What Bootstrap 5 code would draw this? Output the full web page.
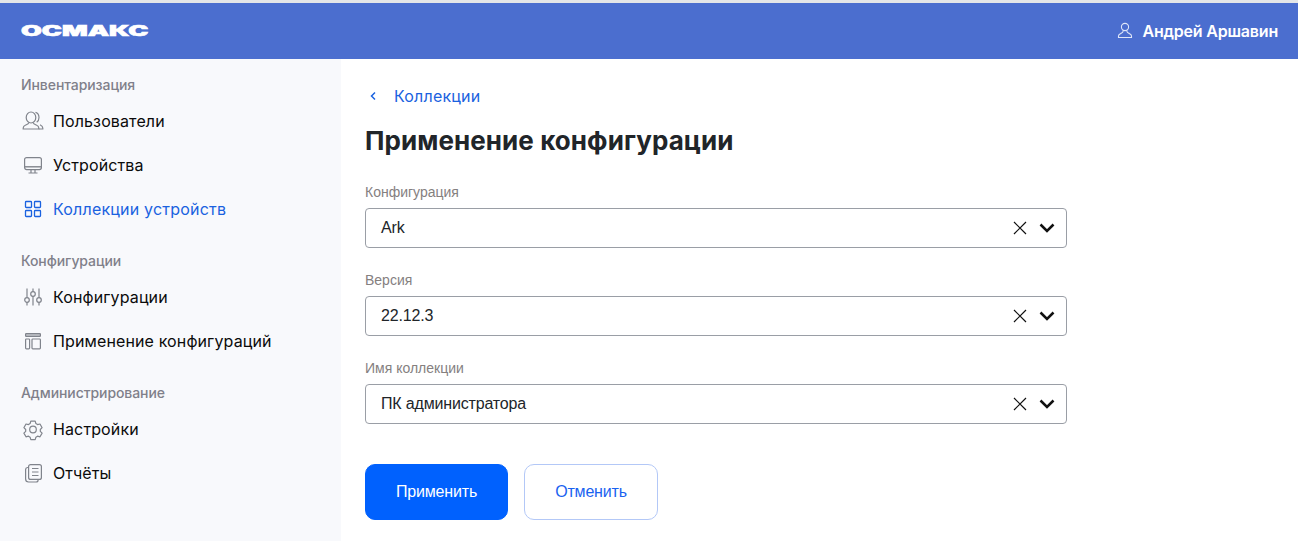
<!DOCTYPE html>
<html lang="ru">
<head>
<meta charset="utf-8">
<title>Применение конфигурации</title>
<link href="https://cdn.jsdelivr.net/npm/bootstrap@5.3.0/dist/css/bootstrap.min.css" rel="stylesheet">
<style>
html,body{height:100%;overflow:hidden}
body{font-family:Inter,"Liberation Sans",sans-serif;background:#fff;border-top:3px solid #e4e6e8;height:541px}
.top-bar{height:56px;background:#4b6ecf;padding:0 20px 0 21px}
.brand-word{display:inline-block;font-weight:900;font-size:14px;line-height:1;color:#fff;transform:scaleX(1.92);transform-origin:left center;-webkit-text-stroke:.6px #fff}
.user-box{color:#fff;font-weight:600;font-size:16px;gap:9px;letter-spacing:-.2px}
.shell{height:482px}
.side-pane{width:341px;flex:none;background:#f8f9fc;padding:16px 21px 0}
.group-title{font-size:14px;line-height:20px;color:#80808a;font-weight:450;height:20px;margin-bottom:4px;letter-spacing:-.08px}
.side-list{margin-bottom:20px}
.side-link{display:flex;align-items:center;height:44px;color:#0b0b0b;text-decoration:none;font-size:16px;font-weight:400;letter-spacing:.12px}
.side-link.sel{color:#1a62e0;letter-spacing:.2px}
.side-ico{width:24px;height:24px;margin-right:8px;flex:none;color:#80848c}
.sel .side-ico{color:#1a62e0}
.main-pane{padding:24px 0 0 24px;width:726px}
.back-link{display:flex;align-items:center;height:26px;color:#1a62e0;text-decoration:none;font-size:16px;gap:12px;letter-spacing:.2px}
.page-head{font-size:26px;font-weight:700;line-height:32px;color:#212529;margin:16px 0 25px;letter-spacing:.08px}
.fld-label{font-family:"Liberation Sans",Arial,sans-serif;font-size:14px;line-height:20px;color:#85807f;margin-bottom:6px;display:block}
.pick-box{height:40px;border:1px solid #9a9ea6;border-radius:4px;padding:0 11px 0 15px;font-family:"Liberation Sans",Arial,sans-serif;font-size:16px;letter-spacing:-.17px;color:#212529;margin-bottom:22px}
.pick-box svg{flex:none}
.pick-ctrl{gap:12px}
.act-row{gap:16px;margin-top:40px}
.act-btn{height:56px;border-radius:10px;font-family:"Liberation Sans",Arial,sans-serif;font-size:16px;letter-spacing:-.17px;display:flex;align-items:center;justify-content:center}
.act-main{width:143px;background:#0061fe;border:1px solid #0061fe;color:#fff}
.act-alt{width:134px;background:#fff;border:1px solid #b3c8f7;color:#1a62f0}
</style>
</head>
<body>
<header class="top-bar d-flex align-items-center justify-content-between">
  <span class="brand-word">ОСМАКС</span>
  <div class="user-box d-flex align-items-center">
    <svg width="16" height="18" viewBox="0 0 16 18" fill="none" stroke="#dfe6f8" stroke-width="1.100"><circle cx="8" cy="5" r="3.600"/><path d="M6 8.500v1.200c0 .8-1 1.200-2.200 1.700C2.400 12 1.500 12.600 1.500 14v1.500h13V14c0-1.400-.9-2-2.300-2.600C11 10.900 10 10.500 10 9.700V8.500"/></svg>
    <span>Андрей Аршавин</span>
  </div>
</header>
<div class="shell d-flex">
  <nav class="side-pane">
    <div class="group-title">Инвентаризация</div>
    <div class="side-list">
      <a class="side-link" href="#"><svg class="side-ico" viewBox="0 0 24 24" fill="none" stroke="currentColor" stroke-width="1.200"><ellipse cx="10" cy="8.500" rx="4.800" ry="5.500"/><path d="M7.500 13.500v.8c0 .8-1.500 1.200-2.800 1.700C3 16.700 2.200 17.500 2.200 19v1h15.600v-1c0-1.500-.8-2.300-2.500-3-1.300-.5-2.800-.9-2.800-1.700v-.8"/><path d="M14.500 3.300c2.300.6 3.500 2.800 3.500 5.200 0 2-.8 3.800-2.300 4.800M19 15.800c1.700.8 2.800 1.700 2.800 3.200v1h-4"/></svg>Пользователи</a>
      <a class="side-link" href="#"><svg class="side-ico" viewBox="0 0 24 24" fill="none" stroke="currentColor" stroke-width="1.200"><rect x="3.600" y="4.600" width="16.800" height="12" rx="2"/><path d="M3.600 13.800h16.800" stroke-width="1.400"/><path d="M10 16.600v3.200M14 16.600v3.200M7.500 20h9"/></svg>Устройства</a>
      <a class="side-link sel" href="#"><svg class="side-ico" viewBox="0 0 24 24" fill="none" stroke="currentColor" stroke-width="1.300"><rect x="4.500" y="4.500" width="6" height="6" rx=".8"/><rect x="13.500" y="4.500" width="6" height="6" rx=".8"/><rect x="4.500" y="13.500" width="6" height="6" rx=".8"/><rect x="13.500" y="13.500" width="6" height="6" rx=".8"/></svg>Коллекции устройств</a>
    </div>
    <div class="group-title">Конфигурации</div>
    <div class="side-list">
      <a class="side-link" href="#"><svg class="side-ico" viewBox="0 0 24 24" fill="none" stroke="currentColor" stroke-width="1.200"><circle cx="6" cy="15" r="2.300"/><circle cx="12" cy="9" r="2.300"/><circle cx="18" cy="15" r="2.300"/><path d="M6 3.500v9M6 17.300v3.200M12 3.500v3.200M12 11.300v9.200M18 3.500v9M18 17.300v3.200"/></svg>Конфигурации</a>
      <a class="side-link" href="#"><svg class="side-ico" viewBox="0 0 24 24" fill="none" stroke="currentColor" stroke-width="1.200"><rect x="4.600" y="4.600" width="14.800" height="2.800" rx=".6" fill="#c4c7cd"/><rect x="4.600" y="10" width="4" height="9.800" rx=".8"/><rect x="11" y="10" width="8.400" height="9.800" rx=".8"/></svg>Применение конфигураций</a>
    </div>
    <div class="group-title">Администрирование</div>
    <div class="side-list">
      <a class="side-link" href="#"><svg class="side-ico" viewBox="0 0 24 24" fill="none" stroke="currentColor" stroke-width="1.200"><circle cx="12" cy="12.500" r="3.300"/><path d="M9.800 4.200h4.400l.7 2.400 1.600 1 2.500-.6 2.100 3.700-1.800 1.800v1.800l1.800 1.800-2.100 3.700-2.500-.6-1.600 1-.7 2.400H9.800l-.7-2.400-1.600-1-2.500.6-2.100-3.700 1.800-1.800v-1.800L2.900 10.700 5 7l2.500.6 1.600-1z" stroke-linejoin="round"/></svg>Настройки</a>
      <a class="side-link" href="#"><svg class="side-ico" viewBox="0 0 24 24" fill="none" stroke="currentColor" stroke-width="1.200"><rect x="7.600" y="3.600" width="12.800" height="14.800" rx="2"/><path d="M11 7.500h6.500M11 11h6.500M11 14.500h6.500"/><path d="M7.600 6.500H6.500A2 2 0 0 0 4.600 8.500V18a3 3 0 0 0 3 3h7.500a2 2 0 0 0 2-2v-.6"/></svg>Отчёты</a>
    </div>
  </nav>
  <main class="main-pane">
    <a class="back-link" href="#"><svg width="17" height="14" viewBox="0 0 17 14" fill="none" stroke="currentColor" stroke-width="1.500"><path d="M10 3.500 6.500 7l3.500 3.500"/></svg>Коллекции</a>
    <h1 class="page-head">Применение конфигурации</h1>
    <div>
      <label class="fld-label">Конфигурация</label>
      <div class="pick-box d-flex align-items-center justify-content-between">
        <span>Ark</span>
        <span class="pick-ctrl d-flex align-items-center">
          <svg width="14" height="14" viewBox="0 0 14 14" stroke="#111" stroke-width="1.200"><path d="M1 1l12 12M13 1 1 13"/></svg>
          <svg width="16" height="10" viewBox="0 0 16 10" fill="none" stroke="#111" stroke-width="2.500"><path d="M1.500 1.500 8 8l6.500-6.500"/></svg>
        </span>
      </div>
      <label class="fld-label">Версия</label>
      <div class="pick-box d-flex align-items-center justify-content-between">
        <span>22.12.3</span>
        <span class="pick-ctrl d-flex align-items-center">
          <svg width="14" height="14" viewBox="0 0 14 14" stroke="#111" stroke-width="1.200"><path d="M1 1l12 12M13 1 1 13"/></svg>
          <svg width="16" height="10" viewBox="0 0 16 10" fill="none" stroke="#111" stroke-width="2.500"><path d="M1.500 1.500 8 8l6.500-6.500"/></svg>
        </span>
      </div>
      <label class="fld-label">Имя коллекции</label>
      <div class="pick-box d-flex align-items-center justify-content-between">
        <span>ПК администратора</span>
        <span class="pick-ctrl d-flex align-items-center">
          <svg width="14" height="14" viewBox="0 0 14 14" stroke="#111" stroke-width="1.200"><path d="M1 1l12 12M13 1 1 13"/></svg>
          <svg width="16" height="10" viewBox="0 0 16 10" fill="none" stroke="#111" stroke-width="2.500"><path d="M1.500 1.500 8 8l6.500-6.500"/></svg>
        </span>
      </div>
    </div>
    <div class="act-row d-flex">
      <button class="btn act-btn act-main" type="button">Применить</button>
      <button class="btn act-btn act-alt" type="button">Отменить</button>
    </div>
  </main>
</div>
<script src="https://cdn.jsdelivr.net/npm/bootstrap@5.3.0/dist/js/bootstrap.bundle.min.js"></script>
</body>
</html>
